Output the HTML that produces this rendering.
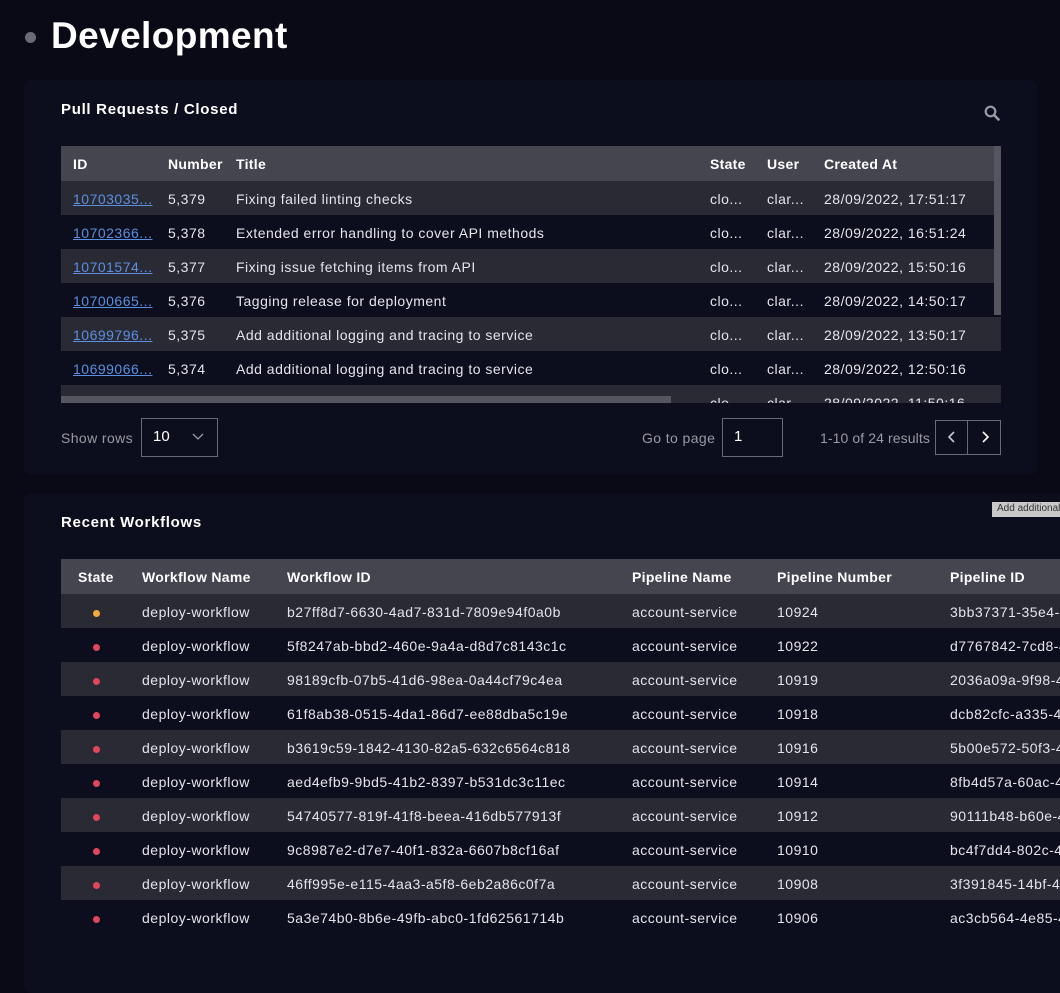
<!DOCTYPE html>
<html><head><style>
*{margin:0;padding:0;box-sizing:border-box}
body{width:1060px;height:978px;background:#0a0a17;font-family:"Liberation Sans",sans-serif;color:#e4e4ea;overflow:hidden;position:relative}
.dot{position:absolute;left:25px;top:32px;width:11px;height:11px;border-radius:50%;background:#6b6b76}
h1{position:absolute;left:51px;top:15px;font-size:37px;font-weight:bold;color:#fff;letter-spacing:0.4px}
.panel{position:absolute;background:#0d0e1d;border-radius:8px}
.pt{position:absolute;font-weight:bold;font-size:15px;color:#fff;letter-spacing:0.7px}
table{border-collapse:collapse;font-size:14px;position:absolute;letter-spacing:0.5px}
th{background:#45454f;text-align:left;font-weight:bold;height:35px;color:#fff;white-space:nowrap;letter-spacing:0.3px}
td{height:34px;white-space:nowrap;color:#e4e4ea;padding-top:1px}
tr.s td{background:#2a2a35}
a{color:#5b8fe0;text-decoration:underline}
.rd{display:inline-block;width:7px;height:7px;border-radius:50%;background:#e0475a}
.or{background:#f4a93c}
.box{position:absolute;border:1px solid #6a6a74}
.g{color:#9a9aa4;font-size:14px;position:absolute;letter-spacing:0.4px}
</style></head><body>
<div class="dot"></div>
<h1>Development</h1>
<div class="panel" style="left:24px;top:80px;width:1013px;height:395px"></div>
<div class="pt" style="left:61px;top:101px">Pull Requests / Closed</div>
<svg style="position:absolute;left:984px;top:105px" width="16" height="16" viewBox="0 0 16 16"><circle cx="6.5" cy="6.5" r="4.8" fill="none" stroke="#9a9aa4" stroke-width="2.2"/><path d="M10 10l4.5 4.5" stroke="#9a9aa4" stroke-width="2.6" stroke-linecap="round"/></svg>
<div style="position:absolute;left:61px;top:146px;width:940px;height:257px;overflow:hidden">
<table style="left:0;top:0;width:940px">
<tr><th style="width:107px;padding-left:12px">ID</th><th style="width:68px">Number</th><th style="width:474px">Title</th><th style="width:57px">State</th><th style="width:57px">User</th><th>Created At</th></tr>
<tr class="s"><td style="padding-left:12px"><a>10703035...</a></td><td>5,379</td><td>Fixing failed linting checks</td><td>clo...</td><td>clar...</td><td>28/09/2022, 17:51:17</td></tr>
<tr><td style="padding-left:12px"><a>10702366...</a></td><td>5,378</td><td>Extended error handling to cover API methods</td><td>clo...</td><td>clar...</td><td>28/09/2022, 16:51:24</td></tr>
<tr class="s"><td style="padding-left:12px"><a>10701574...</a></td><td>5,377</td><td>Fixing issue fetching items from API</td><td>clo...</td><td>clar...</td><td>28/09/2022, 15:50:16</td></tr>
<tr><td style="padding-left:12px"><a>10700665...</a></td><td>5,376</td><td>Tagging release for deployment</td><td>clo...</td><td>clar...</td><td>28/09/2022, 14:50:17</td></tr>
<tr class="s"><td style="padding-left:12px"><a>10699796...</a></td><td>5,375</td><td>Add additional logging and tracing to service</td><td>clo...</td><td>clar...</td><td>28/09/2022, 13:50:17</td></tr>
<tr><td style="padding-left:12px"><a>10699066...</a></td><td>5,374</td><td>Add additional logging and tracing to service</td><td>clo...</td><td>clar...</td><td>28/09/2022, 12:50:16</td></tr>
<tr class="s"><td style="padding-left:12px"><a>10698260...</a></td><td>5,373</td><td>Tagging release for deployment</td><td>clo...</td><td>clar...</td><td>28/09/2022, 11:50:16</td></tr>
</table>
<div style="position:absolute;left:933px;top:0;width:7px;height:169px;background:#55555f"></div>
<div style="position:absolute;left:0;top:250px;width:610px;height:7px;background:#55555f"></div>
</div>
<div class="g" style="left:61px;top:430px">Show rows</div>
<div class="box" style="left:141px;top:418px;width:77px;height:39px"></div>
<div style="position:absolute;left:153px;top:428px;font-size:15px;color:#fff">10</div>
<svg style="position:absolute;left:192px;top:433px" width="12" height="8"><path d="M1 1l5 5 5-5" fill="none" stroke="#9a9aa4" stroke-width="1.3"/></svg>
<div class="g" style="left:642px;top:430px">Go to page</div>
<div class="box" style="left:722px;top:418px;width:61px;height:39px"></div>
<div style="position:absolute;left:734px;top:428px;font-size:15px;color:#fff">1</div>
<div class="g" style="left:820px;top:430px;letter-spacing:0.1px">1-10 of 24 results</div>
<div class="box" style="left:935px;top:420px;width:66px;height:35px"></div>
<div style="position:absolute;left:967px;top:420px;width:1px;height:35px;background:#6a6a74"></div>
<svg style="position:absolute;left:946px;top:431px" width="12" height="12"><path d="M8 1L3 6l5 5" fill="none" stroke="#c8c8d0" stroke-width="1.6"/></svg>
<svg style="position:absolute;left:979px;top:431px" width="12" height="12"><path d="M4 1l5 5-5 5" fill="none" stroke="#fff" stroke-width="1.6"/></svg>
<div class="panel" style="left:24px;top:493px;width:1050px;height:500px"></div>
<div style="position:absolute;left:992px;top:502px;width:70px;height:15px;background:#c8c8c8;color:#333;font-size:10px;padding:1px 5px;white-space:nowrap;overflow:hidden;z-index:5">Add additional</div>
<div class="pt" style="left:61px;top:514px">Recent Workflows</div>
<div style="position:absolute;left:61px;top:559px;width:999px;height:400px;overflow:hidden">
<table style="left:0;top:0;width:1100px">
<tr><th style="width:81px;padding-left:17px">State</th><th style="width:145px">Workflow Name</th><th style="width:345px">Workflow ID</th><th style="width:145px">Pipeline Name</th><th style="width:173px">Pipeline Number</th><th>Pipeline ID</th></tr>
<tr class="s"><td style="padding-left:32px"><span class="rd or"></span></td><td>deploy-workflow</td><td>b27ff8d7-6630-4ad7-831d-7809e94f0a0b</td><td>account-service</td><td>10924</td><td>3bb37371-35e4-4</td></tr>
<tr><td style="padding-left:32px"><span class="rd"></span></td><td>deploy-workflow</td><td>5f8247ab-bbd2-460e-9a4a-d8d7c8143c1c</td><td>account-service</td><td>10922</td><td>d7767842-7cd8-4</td></tr>
<tr class="s"><td style="padding-left:32px"><span class="rd"></span></td><td>deploy-workflow</td><td>98189cfb-07b5-41d6-98ea-0a44cf79c4ea</td><td>account-service</td><td>10919</td><td>2036a09a-9f98-4</td></tr>
<tr><td style="padding-left:32px"><span class="rd"></span></td><td>deploy-workflow</td><td>61f8ab38-0515-4da1-86d7-ee88dba5c19e</td><td>account-service</td><td>10918</td><td>dcb82cfc-a335-4</td></tr>
<tr class="s"><td style="padding-left:32px"><span class="rd"></span></td><td>deploy-workflow</td><td>b3619c59-1842-4130-82a5-632c6564c818</td><td>account-service</td><td>10916</td><td>5b00e572-50f3-4</td></tr>
<tr><td style="padding-left:32px"><span class="rd"></span></td><td>deploy-workflow</td><td>aed4efb9-9bd5-41b2-8397-b531dc3c11ec</td><td>account-service</td><td>10914</td><td>8fb4d57a-60ac-4</td></tr>
<tr class="s"><td style="padding-left:32px"><span class="rd"></span></td><td>deploy-workflow</td><td>54740577-819f-41f8-beea-416db577913f</td><td>account-service</td><td>10912</td><td>90111b48-b60e-4</td></tr>
<tr><td style="padding-left:32px"><span class="rd"></span></td><td>deploy-workflow</td><td>9c8987e2-d7e7-40f1-832a-6607b8cf16af</td><td>account-service</td><td>10910</td><td>bc4f7dd4-802c-4</td></tr>
<tr class="s"><td style="padding-left:32px"><span class="rd"></span></td><td>deploy-workflow</td><td>46ff995e-e115-4aa3-a5f8-6eb2a86c0f7a</td><td>account-service</td><td>10908</td><td>3f391845-14bf-49</td></tr>
<tr><td style="padding-left:32px"><span class="rd"></span></td><td>deploy-workflow</td><td>5a3e74b0-8b6e-49fb-abc0-1fd62561714b</td><td>account-service</td><td>10906</td><td>ac3cb564-4e85-4</td></tr>
</table>
</div>
</body></html>
